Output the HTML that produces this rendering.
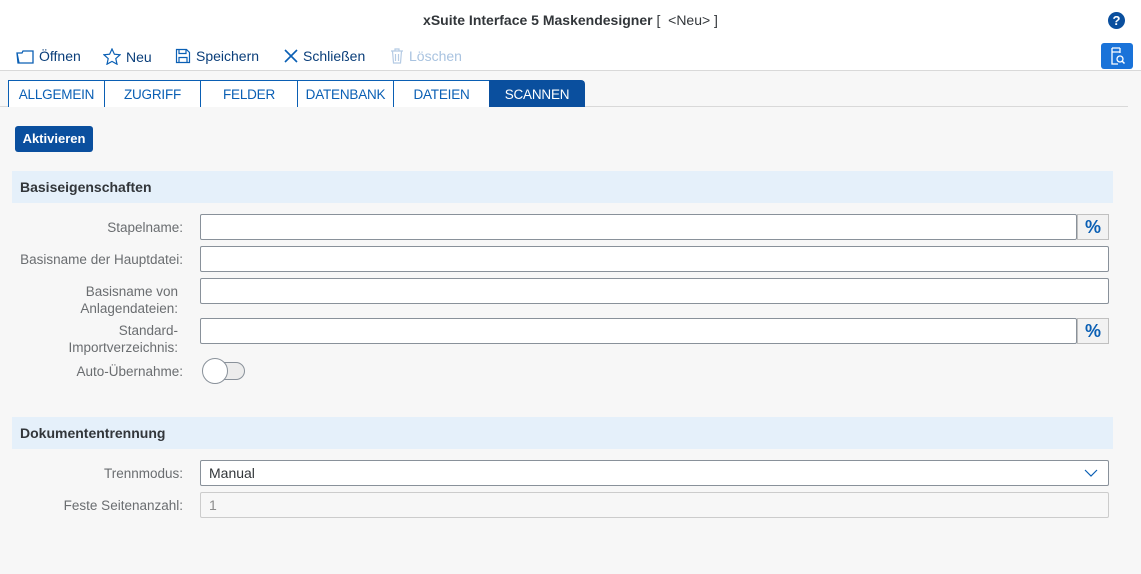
<!DOCTYPE html>
<html><head><meta charset="utf-8"><style>
*{box-sizing:border-box;margin:0;padding:0}
body{width:1141px;height:574px;background:#f7f7f7;font-family:"Liberation Sans",sans-serif;font-size:14px;color:#32363a;position:relative;overflow:hidden}
.abs{position:absolute}
.hdr{left:0;top:0;width:1141px;height:71px;background:#fff;border-bottom:1px solid #d9d9d9}
.title{left:0;width:1141px;top:12px;text-align:center;font-weight:bold;font-size:14px}
.tb{top:48px;font-size:14px;color:#0a3e7a;display:flex;align-items:center;gap:5px}
.tab{top:80px;height:27px;background:#fff;border:1px solid #0a5fb4;border-bottom:none;color:#0a5fb4;font-size:13.5px;text-align:center;line-height:27px;letter-spacing:-0.2px}
.lbl{right:958px;text-align:right;color:#6a6d70;font-size:13.5px;line-height:17px}
.inp{background:#fff;border:1px solid #89919a;border-radius:2px;height:26px}
.sec{left:12px;width:1101px;height:32px;background:#e5f0fa;font-weight:bold;padding-left:8px;line-height:32px;font-size:14px}
.pct{background:#f2f2f2;border:1px solid #c0c0c0;width:32px;height:26px;color:#0a5fb4;font-size:18px;font-weight:bold;text-align:center;line-height:24px}
</style></head><body>
<div class="abs hdr"></div>
<div class="abs title">xSuite Interface 5 Maskendesigner <span style="font-weight:normal">[ &nbsp;&lt;Neu&gt; ]</span></div>
<div class="abs" style="left:1108px;top:12px;width:17px;height:17px;border-radius:50%;background:#0a4f9e;color:#fff;font-weight:bold;font-size:13px;text-align:center;line-height:17px">?</div>
<div class="abs tb" style="left:16px"><svg width="18" height="16"><path d="M1 5h5l1-2h10v12H2z M1 5l2 10" fill="none" stroke="#0a5fb4" stroke-width="1.3"/></svg>Öffnen</div>
<div class="abs tb" style="left:103px"><svg width="18" height="17"><path d="M9 1l2.4 5.2 5.6.6-4.2 3.8 1.2 5.6L9 13.4 4 16.2l1.2-5.6L1 6.8l5.6-.6z" fill="none" stroke="#0a5fb4" stroke-width="1.2"/></svg>Neu</div>
<div class="abs tb" style="left:175px"><svg width="16" height="16"><path d="M1.5 1.5h10l3 3v10h-13z M4 1.5v4h7v-4 M4 14.5v-5h8v5" fill="none" stroke="#0a5fb4" stroke-width="1.2"/></svg>Speichern</div>
<div class="abs tb" style="left:284px"><svg width="14" height="14"><path d="M1 1l12 12M13 1L1 13" stroke="#0a5fb4" stroke-width="1.6"/></svg>Schließen</div>
<div class="abs tb" style="left:390px;color:#a9c3e0"><svg width="14" height="16"><path d="M1 3h12M5 3V1h4v2M2.5 3l1 12h7l1-12M5.5 6v7M8.5 6v7" fill="none" stroke="#b5cbe4" stroke-width="1.2"/></svg>Löschen</div>
<div class="abs" style="left:1101px;top:43px;width:32px;height:26px;background:#1a73d9;border-radius:3px"><svg width="32" height="26"><path d="M11 5h8M11 5v16h6M11 9h8M19 5v5" fill="none" stroke="#fff" stroke-width="1.3"/><circle cx="19" cy="16" r="3" fill="none" stroke="#fff" stroke-width="1.3"/><path d="M21 18l2.5 2.5" stroke="#fff" stroke-width="1.5"/></svg></div>
<div class="abs" style="left:0;top:106px;width:1128px;height:1px;background:#d9d9d9"></div>
<div class="abs tab" style="left:8px;width:97px">ALLGEMEIN</div>
<div class="abs tab" style="left:104px;width:97px">ZUGRIFF</div>
<div class="abs tab" style="left:200px;width:98px">FELDER</div>
<div class="abs tab" style="left:297px;width:97px">DATENBANK</div>
<div class="abs tab" style="left:393px;width:97px">DATEIEN</div>
<div class="abs tab" style="left:489px;width:96px;background:#0a4f9e;color:#fff;border-color:#0a4f9e;border-radius:0 4px 0 0">SCANNEN</div>
<div class="abs" style="left:15px;top:126px;width:78px;height:26px;background:#0a4f9e;border-radius:3px;color:#fff;font-weight:bold;font-size:13px;text-align:center;line-height:26px">Aktivieren</div>
<div class="abs sec" style="top:171px">Basiseigenschaften</div>
<div class="abs lbl" style="top:219px">Stapelname:</div>
<div class="abs inp" style="left:200px;top:214px;width:877px"></div>
<div class="abs pct" style="left:1077px;top:214px">%</div>
<div class="abs lbl" style="top:251px">Basisname der Hauptdatei:</div>
<div class="abs inp" style="left:200px;top:246px;width:909px"></div>
<div class="abs lbl" style="top:283px;right:963px">Basisname von<br>Anlagendateien:</div>
<div class="abs inp" style="left:200px;top:278px;width:909px"></div>
<div class="abs lbl" style="top:322px;right:963px">Standard-<br>Importverzeichnis:</div>
<div class="abs inp" style="left:200px;top:318px;width:877px"></div>
<div class="abs pct" style="left:1077px;top:318px">%</div>
<div class="abs lbl" style="top:363px">Auto-Übernahme:</div>
<div class="abs" style="left:207px;top:362px;width:38px;height:18px;background:#ececec;border:1px solid #89919a;border-radius:9px"></div>
<div class="abs" style="left:202px;top:358px;width:26px;height:26px;background:#fff;border:1px solid #89919a;border-radius:50%"></div>
<div class="abs sec" style="top:417px">Dokumententrennung</div>
<div class="abs lbl" style="top:465px">Trennmodus:</div>
<div class="abs inp" style="left:200px;top:460px;width:909px;padding-left:8px;line-height:24px">Manual<svg class="abs" style="right:10px;top:8px" width="14" height="8"><path d="M1 1l6 6 6-6" fill="none" stroke="#0a5fb4" stroke-width="1.2"/></svg></div>
<div class="abs lbl" style="top:497px">Feste Seitenanzahl:</div>
<div class="abs inp" style="left:200px;top:492px;width:909px;background:#f7f7f7;border-color:#ccc;padding-left:8px;line-height:24px;color:#8c8c8c">1</div>
</body></html>
